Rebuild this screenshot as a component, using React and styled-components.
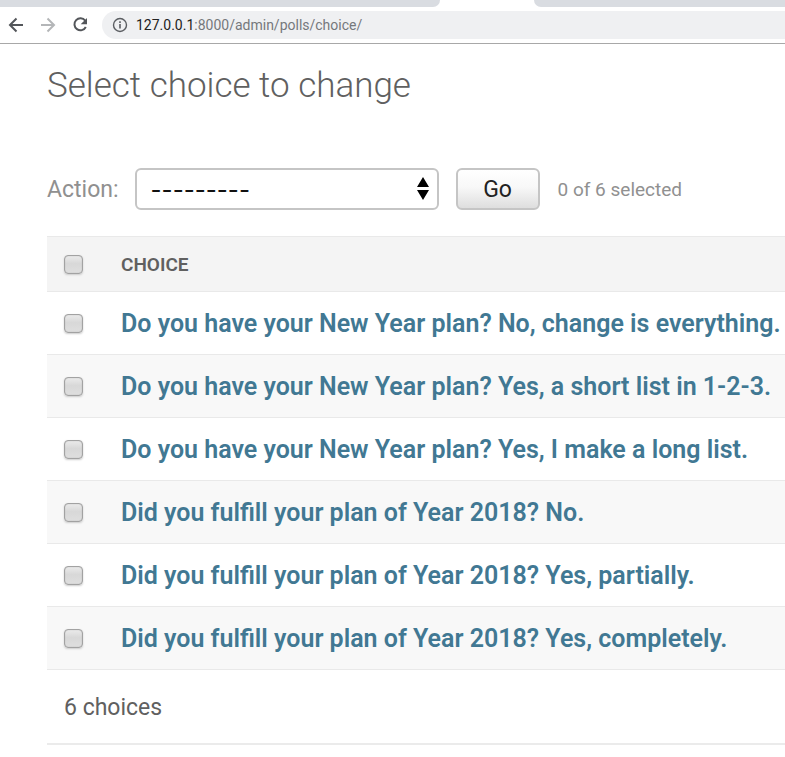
import React, { useState } from "react";
import styled, { createGlobalStyle } from "styled-components";

const GlobalStyle = createGlobalStyle`
  * { box-sizing: border-box; }
  body {
    margin: 0;
    background: #fff;
    color: #555;
    font-family: Roboto, "Liberation Sans", sans-serif;
    overflow-x: hidden;
  }
`;

const Browser = styled.header`
  border-bottom: 1px solid #a8a8a8;
`;

const TabStrip = styled.div`
  display: flex;
  justify-content: space-between;
  height: 7px;
`;

const TabEdge = styled.div`
  width: ${(p) => (p.$end ? "32%" : "56%")};
  background: #d9dce1;
  border-radius: ${(p) => (p.$end ? "0 0 0 7px" : "0 0 7px 0")};
`;

const Toolbar = styled.nav`
  display: flex;
  align-items: center;
  height: 36px;
  padding-left: 6px;
`;

const IconButton = styled.button`
  display: flex;
  width: 32px;
  padding: 0;
  border: 0;
  background: none;
  color: ${(p) => (p.disabled ? "#b4b6b8" : "#53565a")};
`;

const AddressBar = styled.div`
  display: flex;
  flex: 1;
  align-items: center;
  gap: 8px;
  height: 28px;
  padding-left: 10px;
  border-radius: 14px 0 0 14px;
  background: #eff0f2;
  color: #75787c;
  font: 14px/28px Roboto, sans-serif;
`;

const Host = styled.span`
  color: #222;
`;

const Content = styled.main`
  padding: 20px 0 0 47px;
`;

const Title = styled.h1`
  margin: 0 0 60px;
  color: #606060;
  font-size: 35px;
  font-weight: 300;
  line-height: 44px;
`;

const Actions = styled.div`
  display: flex;
  align-items: center;
  margin-bottom: 26px;
  color: #909090;
`;

const ActionLabel = styled.label`
  display: flex;
  align-items: center;
  gap: 16px;
  font-size: 23px;
`;

const SelectBox = styled.span`
  display: grid;
  align-items: center;
  width: 304px;

  > * { grid-area: 1 / 1; }
  > svg { justify-self: end; margin-right: 10px; pointer-events: none; }
`;

const Select = styled.select`
  appearance: none;
  width: 100%;
  height: 42px;
  padding: 0 34px 0 14px;
  border: 2px solid #c5c5c5;
  border-radius: 6px;
  background: #fff;
  color: #111;
  font: 24px Inter, sans-serif;
`;

const GoButton = styled.button`
  width: 84px;
  height: 42px;
  margin: 0 18px 0 17px;
  padding: 0;
  border: 2px solid #c5c5c5;
  border-radius: 6px;
  background: linear-gradient(#fff, #f8f8f8 45%, #dedede);
  color: #222;
  font: 23px Roboto, sans-serif;
`;

const Counter = styled.span`
  font-size: 19px;
`;

const Results = styled.table`
  width: 100%;
  border-collapse: collapse;
  white-space: nowrap;
`;

const HeadRow = styled.tr`
  height: 55px;
  border-top: 1px solid #e9e9e9;
  border-bottom: 1px solid #e9e9e9;
  background: #f4f4f4;
`;

const Row = styled.tr`
  height: 63px;
  border-bottom: 1px solid #e9e9e9;
  &:nth-child(even) { background: #f8f8f8; }
`;

const CheckCell = styled.td`
  width: 74px;
  padding: 0 0 0 17px;
`;

const Checkbox = styled.input.attrs({ type: "checkbox" })`
  appearance: none;
  display: block;
  width: 19px;
  height: 19px;
  margin: 0;
  border: 1px solid #a2a2a2;
  border-radius: 4px;
  background: linear-gradient(#eaeaea, #d8d8d8 45%, #dedede);
  box-shadow: 0 1px 2px #ccc, inset 0 0 1px #999;
  &:checked { background: #417893; }
`;

const ColumnHead = styled.th`
  padding: 0;
  text-align: left;
  color: #606060;
  font-size: 19px;
  font-weight: 600;
`;

const ChoiceHead = styled.th`
  padding: 0;
  text-align: left;
  font-size: 25px;
  font-weight: 600;
`;

const ChoiceLink = styled.a`
  color: #417893;
  text-decoration: none;
`;

const Paginator = styled.p`
  margin: 0;
  padding: 23px 17px 20px;
  border-bottom: 2px solid #ebebeb;
  color: #606060;
  font-size: 23px;
  line-height: 30px;
`;

const choices = [
  "Do you have your New Year plan? No, change is everything.",
  "Do you have your New Year plan? Yes, a short list in 1-2-3.",
  "Do you have your New Year plan? Yes, I make a long list.",
  "Did you fulfill your plan of Year 2018? No.",
  "Did you fulfill your plan of Year 2018? Yes, partially.",
  "Did you fulfill your plan of Year 2018? Yes, completely.",
];

const Arrow = ({ d }) => (
  <svg width="20" height="20" viewBox="0 0 20 20" fill="none" stroke="currentColor" strokeWidth="2" aria-hidden="true">
    <path d={d} />
  </svg>
);

export default function App() {
  const [picked, setPicked] = useState([]);
  const toggle = (i) =>
    setPicked(picked.includes(i) ? picked.filter((n) => n !== i) : [...picked, i]);
  const all = picked.length === choices.length;

  return (
    <>
      <GlobalStyle />
      <Browser>
        <TabStrip>
          <TabEdge />
          <TabEdge $end />
        </TabStrip>
        <Toolbar aria-label="Browser">
          <IconButton aria-label="Back"><Arrow d="M17 10H4M10.500 3.500 4 10l6.500 6.500" /></IconButton>
          <IconButton aria-label="Forward" disabled><Arrow d="M3 10h13M9.500 3.500 16 10l-6.500 6.500" /></IconButton>
          <IconButton aria-label="Reload">
            <svg width="20" height="20" viewBox="0 0 20 20" aria-hidden="true">
              <path d="M15.200 5.600A6 6 0 1 0 15.800 12" fill="none" stroke="currentColor" strokeWidth="2" />
              <path d="M17 3v6.300h-6.300Z" fill="currentColor" />
            </svg>
          </IconButton>
          <AddressBar>
            <svg width="16" height="16" viewBox="0 0 16 16" fill="none" stroke="#5b5e62" aria-hidden="true">
              <circle cx="8" cy="8" r="6.500" strokeWidth="1.400" />
              <path d="M8 7v4.500M8 4.300v1.700" strokeWidth="1.600" />
            </svg>
            <span><Host>127.0.0.1</Host>:8000/admin/polls/choice/</span>
          </AddressBar>
        </Toolbar>
      </Browser>
      <Content>
        <Title>Select choice to change</Title>
        <Actions>
          <ActionLabel>
            Action:
            <SelectBox>
              <Select>
                <option>---------</option>
                <option>Delete selected choices</option>
              </Select>
              <svg width="12" height="24" viewBox="0 0 12 24" aria-hidden="true">
                <path d="M6 0 12 10H0ZM0 13h12l-6 10Z" />
              </svg>
            </SelectBox>
          </ActionLabel>
          <GoButton>Go</GoButton>
          <Counter>{picked.length} of 6 selected</Counter>
        </Actions>
        <Results>
          <thead>
            <HeadRow>
              <CheckCell>
                <Checkbox
                  aria-label="Select all choices"
                  checked={all}
                  onChange={() => setPicked(all ? [] : choices.map((_, i) => i))}
                />
              </CheckCell>
              <ColumnHead scope="col">CHOICE</ColumnHead>
            </HeadRow>
          </thead>
          <tbody>
            {choices.map((text, i) => (
              <Row key={text}>
                <CheckCell>
                  <Checkbox aria-label={text} checked={picked.includes(i)} onChange={() => toggle(i)} />
                </CheckCell>
                <ChoiceHead scope="row"><ChoiceLink href="#choice">{text}</ChoiceLink></ChoiceHead>
              </Row>
            ))}
          </tbody>
        </Results>
        <Paginator>6 choices</Paginator>
      </Content>
    </>
  );
}
